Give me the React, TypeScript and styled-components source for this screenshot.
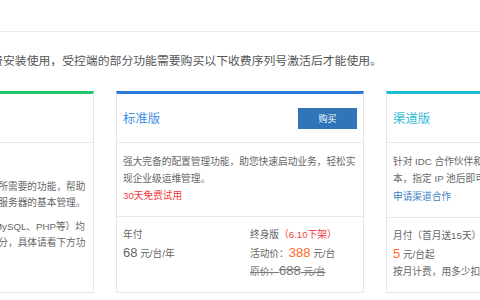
import styled, { createGlobalStyle } from 'styled-components';

const GlobalStyle = createGlobalStyle`
  html, body {
    margin: 0;
    padding: 0;
    background: #fff;
    overflow: hidden;
  }
  body {
    font-family: "Liberation Sans", "Noto Sans CJK SC", sans-serif;
    color: #666;
  }
`;

const TopBar = styled.div`
  height: 31px;
  border-bottom: 1px solid #ececec;
`;

const Content = styled.div`
  margin-left: -154px;
  width: 788px;
`;

const Notice = styled.p`
  margin: 0;
  padding: 19px 0 0 3px;
  font-size: 11.85px;
  line-height: 20px;
  color: #555;
  white-space: nowrap;
`;

const CardRow = styled.div`
  display: flex;
  gap: 22px;
  margin-top: 20px;
`;

const Card = styled.div<{ $accent: string }>`
  width: 248px;
  box-sizing: border-box;
  border: 1px solid #e6e6e6;
  border-top: 3px solid ${(p) => p.$accent};
  display: flex;
  flex-direction: column;
  background: #fff;
`;

const CardHeader = styled.div`
  height: 48px;
  padding: 0 6px;
  display: flex;
  align-items: center;
  justify-content: space-between;
  border-bottom: 1px solid #e8e8e8;
`;

const Title = styled.h3<{ $color: string }>`
  margin: 0;
  font-size: 12.4px;
  font-weight: normal;
  color: ${(p) => p.$color};
`;

const BuyButton = styled.button`
  width: 59px;
  height: 21px;
  border: none;
  background: #2f75b8;
  color: #fff;
  font-family: inherit;
  font-size: 9px;
  padding: 0;
  margin-top: 1px;
`;

const CardBody = styled.div<{ $grow?: boolean }>`
  padding: 11px 6px 11.5px;
  font-size: 9.7px;
  line-height: 16.5px;
  ${(p) => (p.$grow ? 'flex: 1;' : '')}
`;

const Paragraph = styled.p<{ $gap?: number }>`
  margin: ${(p) => p.$gap ?? 0}px 0 0;
  white-space: normal;
`;

const Trial = styled.div`
  margin-top: 1px;
  color: #f43b3b;
`;

const Link = styled.a`
  display: block;
  margin-top: 2px;
  color: #3a7fc6;
  text-decoration: none;
`;

const Pricing = styled.div<{ $cols?: boolean }>`
  border-top: 1px solid #e8e8e8;
  padding: 9px 6px 11px;
  font-size: 9.7px;
  line-height: 17.5px;
  display: grid;
  grid-template-columns: ${(p) => (p.$cols ? '127px 1fr' : '1fr')};
  white-space: nowrap;
`;

const PriceLine = styled.div<{ $strike?: boolean }>`
  color: #666;
  ${(p) => (p.$strike ? 'text-decoration: line-through; color: #777;' : '')}
`;

const Big = styled.span<{ $orange?: boolean }>`
  font-size: 13px;
  color: ${(p) => (p.$orange ? '#ff6a1e' : 'inherit')};
`;

const Red = styled.span`
  color: #f43b3b;
`;

export default function App() {
  return (
    <>
      <GlobalStyle />
      <TopBar />
      <Content>
        <Notice>提示：主控端程序可永久免费安装使用，受控端的部分功能需要购买以下收费序列号激活后才能使用。</Notice>
        <CardRow>
          <Card $accent="#22c46c">
            <CardHeader>
              <Title $color="#22b868">免费版</Title>
            </CardHeader>
            <CardBody $grow>
              <div>免费版功能说明：</div>
              <Paragraph $gap={8}>
                免费版为您提供主机日常运维管理所需要的功能，帮助用户轻松高效地完成对单台或多台服务器的基本管理。
              </Paragraph>
              <Paragraph $gap={7}>
                系统环境中常用软件（如Nginx、MySQL、PHP等）均
                <br />
                可免费使用，部分功能属于收费部分，具体请看下方功能对比。
              </Paragraph>
            </CardBody>
          </Card>

          <Card $accent="#2a7adf">
            <CardHeader>
              <Title $color="#3f8ee3">标准版</Title>
              <BuyButton>购买</BuyButton>
            </CardHeader>
            <CardBody>
              <Paragraph>强大完备的配置管理功能，助您快速启动业务，轻松实现企业级运维管理。</Paragraph>
              <Trial>30天免费试用</Trial>
            </CardBody>
            <Pricing $cols>
              <div>
                <PriceLine>年付</PriceLine>
                <PriceLine>
                  <Big>68</Big> 元/台/年
                </PriceLine>
              </div>
              <div>
                <PriceLine>
                  终身版<Red>（6.10下架）</Red>
                </PriceLine>
                <PriceLine>
                  活动价：<Big $orange>388</Big> 元/台
                </PriceLine>
                <PriceLine $strike>
                  原价：<Big>688</Big> 元/台
                </PriceLine>
              </div>
            </Pricing>
          </Card>

          <Card $accent="#19bdd6">
            <CardHeader>
              <Title $color="#35bcd8">渠道版</Title>
              <BuyButton>购买</BuyButton>
            </CardHeader>
            <CardBody>
              <Paragraph>
                针对 IDC 合作伙伴和代理商推出的专属渠道版
                <br />
                本，指定 IP 池后即可统一批量授权管理。
              </Paragraph>
              <Link href="#">申请渠道合作</Link>
            </CardBody>
            <Pricing>
              <PriceLine>月付（首月送15天）</PriceLine>
              <PriceLine>
                <Big $orange>5</Big> 元/台起
              </PriceLine>
              <PriceLine>按月计费，用多少扣多少</PriceLine>
            </Pricing>
          </Card>
        </CardRow>
      </Content>
    </>
  );
}
